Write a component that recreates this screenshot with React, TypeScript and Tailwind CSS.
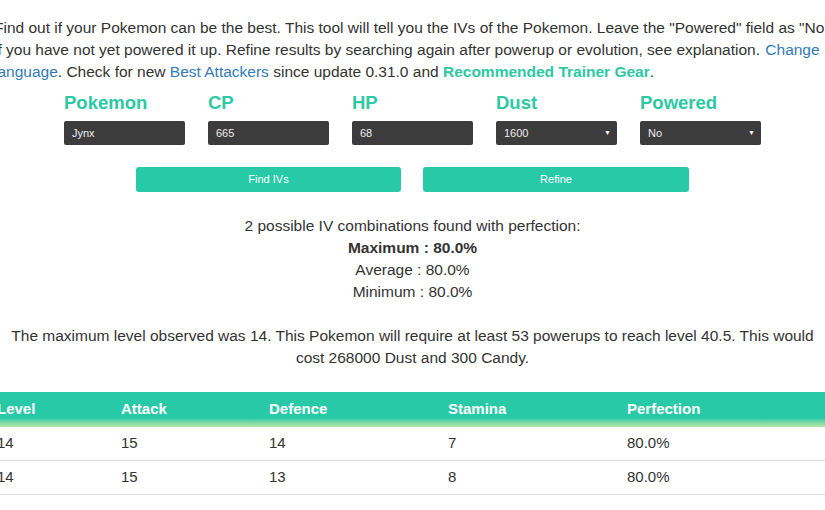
const fields = [
  { label: 'Pokemon', value: 'Jynx', select: false },
  { label: 'CP', value: '665', select: false },
  { label: 'HP', value: '68', select: false },
  { label: 'Dust', value: '1600', select: true },
  { label: 'Powered', value: 'No', select: true },
]

const rows = [
  ['14', '15', '14', '7', '80.0%'],
  ['14', '15', '13', '8', '80.0%'],
]

const headers = ['Level', 'Attack', 'Defence', 'Stamina', 'Perfection']

export default function App() {
  return (
    <div className="w-[825px] h-[510px] overflow-hidden bg-white font-['Liberation_Sans',Arial,sans-serif] text-[#333]">
      {/* Intro */}
      <p className="ml-[-6px] w-[841px] pt-[17px] text-[15.5px] leading-[22px]">
        Find out if your Pokemon can be the best. This tool will tell you the IVs of the Pokemon. Leave the
        "Powered" field as "No" if you have not yet powered it up. Refine results by searching again after powerup
        or evolution, see explanation. <span className="ml-[1px] text-[#337ab7]">Change language</span>. Check for new{' '}
        <span className="text-[#337ab7]">Best Attackers</span> since update 0.31.0 and{' '}
        <span className="font-bold text-[#2cc9a2]">Recommended Trainer Gear</span>.
      </p>

      {/* Form */}
      <div className="mt-[8px] flex justify-center gap-[23px]">
        {fields.map((f) => (
          <div key={f.label} className="w-[121px]">
            <div className="text-[18.5px] leading-[24px] font-bold text-[#2cc9a2]">{f.label}</div>
            <div className="mt-[6px] h-[24px] rounded-[2px] bg-[#3c3c3c] pl-[8px] pr-[6px] flex items-center justify-between text-[11px] text-[#eee]">
              <span>{f.value}</span>
              {f.select && <span className="text-[7px] text-white">▼</span>}
            </div>
          </div>
        ))}
      </div>

      {/* Buttons */}
      <div className="mt-[22px] flex justify-center gap-[22px]">
        <div className="w-[265px] h-[25px] rounded-[3px] bg-[#27c9a7] text-white text-[11px] flex items-center justify-center">
          Find IVs
        </div>
        <div className="w-[266px] h-[25px] rounded-[3px] bg-[#27c9a7] text-white text-[11px] flex items-center justify-center">
          Refine
        </div>
      </div>

      {/* Results */}
      <div className="mt-[23px] text-center text-[15.5px] leading-[22px]">
        <div>2 possible IV combinations found with perfection:</div>
        <div className="font-bold">Maximum : 80.0%</div>
        <div>Average : 80.0%</div>
        <div>Minimum : 80.0%</div>
      </div>

      <p className="mt-[22px] text-center text-[15.5px] leading-[22px]">
        The maximum level observed was 14. This Pokemon will require at least 53 powerups to reach level 40.5. This
        would cost 268000 Dust and 300 Candy.
      </p>

      {/* Table */}
      <div className="mt-[23px] ml-[-11px] w-[846px] text-[15px]">
        <div className="grid grid-cols-[124px_148px_179px_179px_1fr] h-[35px] items-center bg-linear-to-b from-[#27c9a7] via-[#27c9a7] via-75% to-[#b4e8a2] text-white font-bold">
          {headers.map((h) => (
            <div key={h} className="px-[8px]">{h}</div>
          ))}
        </div>
        {rows.map((r, i) => (
          <div
            key={i}
            className="grid grid-cols-[124px_148px_179px_179px_1fr] h-[34px] items-center border-b border-[#ddd]"
          >
            {r.map((c, j) => (
              <div key={j} className="px-[8px]">{c}</div>
            ))}
          </div>
        ))}
      </div>
    </div>
  )
}
